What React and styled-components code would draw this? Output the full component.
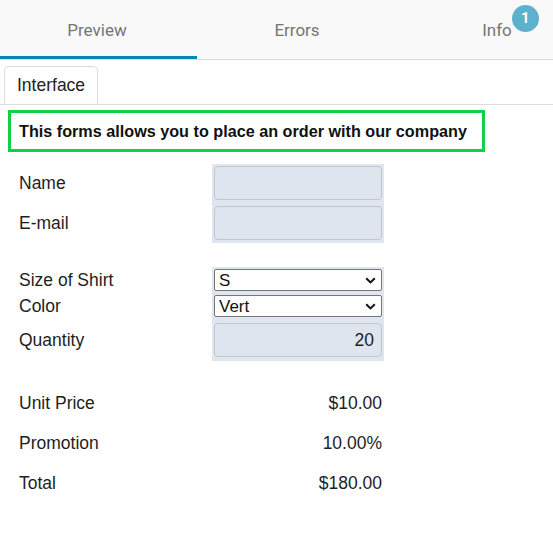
import React from "react";
import styled, { createGlobalStyle } from "styled-components";

const Global = createGlobalStyle`
  html, body { margin: 0; padding: 0; background: #fff; }
  body { font-family: "Liberation Sans", Arial, sans-serif; color: #222; }
  * { box-sizing: border-box; }
`;

const Page = styled.div`
  width: 553px;
  overflow: hidden;
`;

const TabBar = styled.div`
  display: flex;
  height: 60px;
  background: #f9f9f9;
  border-bottom: 1px solid #dcdcdc;
`;

const Tab = styled.div`
  position: relative;
  flex: 0 0 200px;
  display: flex;
  align-items: center;
  justify-content: center;
  padding-right: 6px;
  font-family: Roboto, "Liberation Sans", sans-serif;
  font-size: 17px;
  color: #757575;
  &::after {
    content: "";
    display: ${(p) => (p.$active ? "block" : "none")};
    position: absolute;
    left: 0;
    right: 3px;
    bottom: 0;
    height: 3px;
    background: #0a86b6;
  }
`;

const TabText = styled.span`
  position: relative;
`;

const Badge = styled.span`
  position: absolute;
  left: 100%;
  top: -15px;
  width: 27px;
  height: 27px;
  border-radius: 50%;
  background: #5eb1cc;
  color: #fff;
  font-family: Roboto, "Liberation Sans", sans-serif;
  font-weight: 700;
  font-size: 15px;
  display: flex;
  align-items: center;
  justify-content: center;
`;

const SubTabs = styled.div`
  display: flex;
  padding: 6px 0 0 4px;
  border-bottom: 1px solid #dcdcdc;
`;

const SubTab = styled.div`
  height: 38px;
  padding: 0 12px;
  display: flex;
  align-items: center;
  border: 1px solid #dcdcdc;
  border-bottom: none;
  border-radius: 5px 5px 0 0;
  font-size: 17.5px;
  color: #222;
`;

const Content = styled.div`
  padding: 5px 68px 0 8px;
`;

const Heading = styled.div`
  height: 42px;
  border: 3px solid #13cf47;
  padding: 0 8px;
  display: flex;
  align-items: center;
  font-weight: 700;
  font-size: 16.2px;
  color: #111;
`;

const Form = styled.div`
  display: grid;
  grid-template-columns: 193px 172px;
  margin-top: 12px;
  padding-left: 11px;
`;

const Label = styled.div`
  display: flex;
  align-items: center;
  font-size: 17.5px;
  color: #1e1e1e;
`;

const Cell = styled.div`
  background: ${(p) => (p.$shaded ? "#dfe6ef" : "transparent")};
  padding: ${(p) => p.$pad || "0 2px"};
  display: flex;
  align-items: center;
  justify-content: flex-end;
  min-height: ${(p) => p.$h || 0}px;
  font-size: 17.5px;
  color: #1e1e1e;
`;

const Spacer = styled.div`
  grid-column: 1 / -1;
  height: ${(p) => p.$h}px;
`;

const Input = styled.input`
  width: 100%;
  height: 34px;
  border: 1px solid #c5c5c5;
  border-radius: 4px;
  background: #dee5ee;
  font-family: "Liberation Sans", Arial, sans-serif;
  font-size: 17.5px;
  color: #1e1e1e;
  text-align: ${(p) => (p.$right ? "right" : "left")};
  padding: 0 7px;
  outline: none;
`;

const SelectWrap = styled.div`
  position: relative;
  width: 100%;
  height: 22px;
`;

const Select = styled.select`
  appearance: none;
  -webkit-appearance: none;
  width: 100%;
  height: 22px;
  border: 1px solid #767676;
  border-radius: 2px;
  background: #fff;
  font-family: "Liberation Sans", Arial, sans-serif;
  font-size: 17px;
  line-height: 20px;
  color: #111;
  padding: 1px 20px 0 4px;
  outline: none;
`;

const Chevron = styled.svg`
  position: absolute;
  right: 6px;
  top: 8px;
  width: 11px;
  height: 7px;
  pointer-events: none;
`;

function Dropdown({ value, options }) {
  return (
    <SelectWrap>
      <Select defaultValue={value}>
        {options.map((o) => (
          <option key={o}>{o}</option>
        ))}
      </Select>
      <Chevron viewBox="0 0 11 7">
        <path d="M1.2 1.2 L5.5 5.4 L9.8 1.2" fill="none" stroke="#111" strokeWidth="2" />
      </Chevron>
    </SelectWrap>
  );
}

export default function App() {
  return (
    <Page>
      <Global />
      <TabBar>
        <Tab $active>
          <TabText>Preview</TabText>
        </Tab>
        <Tab>
          <TabText>Errors</TabText>
        </Tab>
        <Tab>
          <TabText>
            Info
            <Badge>1</Badge>
          </TabText>
        </Tab>
      </TabBar>
      <SubTabs>
        <SubTab>Interface</SubTab>
      </SubTabs>
      <Content>
        <Heading>This forms allows you to place an order with our company</Heading>
        <Form>
          <Label>Name</Label>
          <Cell $shaded $pad="2px 2px 3px">
            <Input />
          </Cell>
          <Label>E-mail</Label>
          <Cell $shaded $pad="3px 2px">
            <Input />
          </Cell>
          <Spacer $h={24} />
          <Label>Size of Shirt</Label>
          <Cell $shaded $pad="2px 2px">
            <Dropdown value="S" options={["S", "M", "L"]} />
          </Cell>
          <Label>Color</Label>
          <Cell $shaded $pad="2px 2px">
            <Dropdown value="Vert" options={["Vert", "Rouge", "Bleu"]} />
          </Cell>
          <Label>Quantity</Label>
          <Cell $shaded $pad="4px 2px">
            <Input $right defaultValue="20" />
          </Cell>
          <Spacer $h={22} />
          <Label>Unit Price</Label>
          <Cell $h={40}>$10.00</Cell>
          <Label>Promotion</Label>
          <Cell $h={40}>10.00%</Cell>
          <Label>Total</Label>
          <Cell $h={40}>$180.00</Cell>
        </Form>
      </Content>
    </Page>
  );
}
